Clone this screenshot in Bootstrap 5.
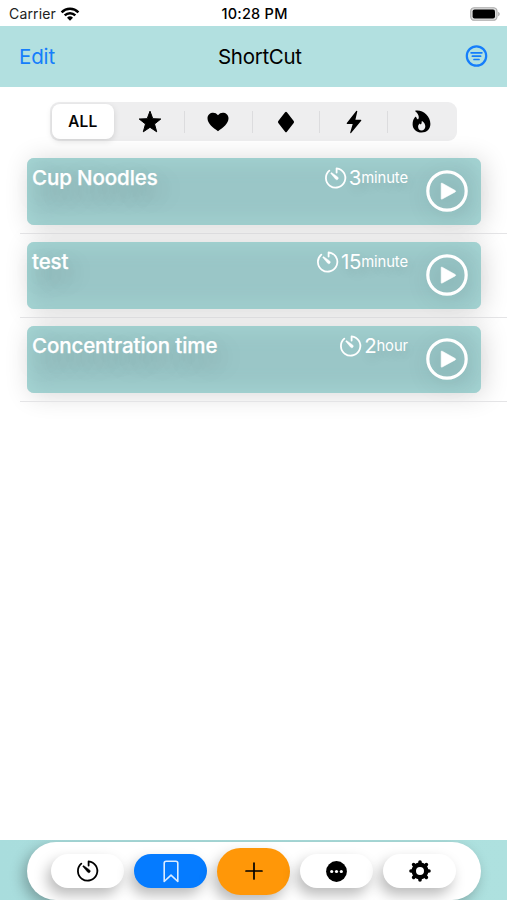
<!DOCTYPE html>
<html lang="en">
<head>
<meta charset="utf-8">
<meta name="viewport" content="width=device-width, initial-scale=1">
<title>ShortCut</title>
<link href="https://cdn.jsdelivr.net/npm/bootstrap@5.3.0/dist/css/bootstrap.min.css" rel="stylesheet">
<style>
body{font-family:Inter,"Liberation Sans",sans-serif;color:#000;background:#fff}
svg{display:block;flex:none}
.screen{height:900px}
.status{height:26px;font-size:14px;padding:1px 7px 0 9px}
.status>div{flex:1 1 0}
.carrier{letter-spacing:.15px;color:#222}
.clock{font-weight:500;font-size:14.5px;letter-spacing:.25px}
.titlebar{height:61px;background:#b2e0e0;padding:0 19px;font-size:20.5px}
.titlebar>div{flex:1 1 0}
.titlebar>.lead-side{flex:0 0 199px}
.edit{color:#157efb;letter-spacing:-.15px}
.title{letter-spacing:-.3px}
.edit,.title{position:relative;top:.5px}
.segments{width:407px;height:39px;margin:15px 0 9px 50px;background:#eeeeef;border-radius:9px;padding:2px 2px 2px 2px}
.segment{flex:1 1 0;position:relative}
.segment.on{flex:0 0 62px;height:35px;margin-right:3px;background:#fff;border-radius:8px;box-shadow:0 2px 6px rgba(0,0,0,.13);font-size:15.5px;font-weight:500;letter-spacing:.25px;-webkit-text-stroke:.2px #000}
.segment.bar{border-right:1px solid #dcdcde;height:22px}
.entry{height:84px;padding:8px 26px 8px 27px;position:relative}
.entry::after{content:"";position:absolute;left:20px;right:0;bottom:0;height:1px;background:#e4e4e6}
.tile{height:67px;border-radius:7px;background:#9ac6c7;color:#fff;padding:0 13px 0 5px;box-shadow:inset 0 0 22px #a7d8d6,3px 2px 26px rgba(0,0,0,.16)}
.tile-name{font-size:20.5px;font-weight:500;line-height:26px;padding-top:7px;letter-spacing:-.1px;-webkit-text-stroke:.25px #fff;text-shadow:4px 10px 26px rgba(0,40,40,.28)}
.time{height:26px;margin:7px 18px 0 0;line-height:26px;text-shadow:2px 5px 12px rgba(0,40,40,.12)}
.num{font-size:20.5px;margin-left:1px;letter-spacing:-.3px}
.unit{font-size:14.8px;letter-spacing:-.1px}
.play{margin-top:-1px;filter:drop-shadow(2px 5px 10px rgba(0,40,40,.2))}
.footer-bar{height:60px;background:linear-gradient(90deg,#a9dddd,#aee1df);padding:2px 26px 0 27px;overflow:hidden}
.dock{height:58px;border-radius:29px;background:#fff;padding:0 25px 0 24px;box-shadow:-4px 5px 14px rgba(0,0,0,.28)}
.pill{width:73px;height:34px;border-radius:17px;background:#fff;box-shadow:-4px 7px 14px rgba(0,0,0,.27)}
.pill.blue{background:#057bff}
.pill.orange{height:47px;border-radius:24px;background:#ff9708}
</style>
<script src="https://cdn.jsdelivr.net/npm/bootstrap@5.3.0/dist/js/bootstrap.bundle.min.js"></script>
</head>
<body>
<svg width="0" height="0" class="position-absolute" aria-hidden="true">
<symbol id="timer" viewBox="0 0 24 24"><path d="M5.3 4.6A9.7 9.7 0 1 0 12.6 2.3v4.2" fill="none" stroke="currentColor" stroke-width="1.8" stroke-linecap="round" stroke-linejoin="round"/><path d="M6.9 7.6c-.3-.6.3-1.1.9-.8l5.8 4.1c1.7 1.5-.2 3.8-1.9 2.3z" fill="currentColor" stroke="currentColor" stroke-width=".5"/></symbol>
<symbol id="play" viewBox="0 0 42 42"><circle cx="21" cy="21" r="19.2" fill="none" stroke="currentColor" stroke-width="3.2"/><path d="M15.2 13.7v14.8q0 1 1 .5l13-7.1q1-.7 0-1.4l-13-7.3q-1-.5-1 .5z" fill="currentColor" stroke="currentColor" stroke-width=".6"/></symbol>
</svg>
<div class="screen d-flex flex-column overflow-hidden">
<div class="status d-flex align-items-center">
<div class="d-flex align-items-center"><span class="carrier">Carrier</span>
<svg class="ms-1" width="20" height="14" viewBox="0 0 20 14" fill="none" stroke="#000" stroke-width="2.5"><path d="M1.6 5.3a12 12 0 0 1 16.8 0M4.7 8.4a7.6 7.6 0 0 1 10.6 0"/><path d="M7 10.8a4.3 4.3 0 0 1 6 0l-3 3z" fill="#000" stroke="none"/></svg></div>
<span class="clock">10:28 PM</span>
<div class="d-flex justify-content-end"><svg width="30" height="14" viewBox="0 0 30 14"><rect x=".7" y=".7" width="26.3" height="12.6" rx="3.6" fill="#ddd" stroke="#aaa" stroke-width="1.1"/><rect x="2.6" y="2.5" width="22.4" height="9" rx="2" fill="#000"/><path d="M28.2 4.7c2 .8 2 3.8 0 4.6z" fill="#aaa"/></svg></div>
</div>
<nav class="titlebar d-flex align-items-center">
<div class="lead-side"><span class="edit">Edit</span></div><span class="title">ShortCut</span>
<div class="d-flex justify-content-end"><svg width="23" height="23" viewBox="0 0 23 23" fill="none" stroke="#157efb"><circle cx="11.5" cy="11" r="9.7" stroke-width="2.2"/><path d="M6.1 7.8h10.8M7.4 11.2h8.2M9 14.5h5" stroke-width="1.7" stroke-linecap="round"/></svg></div>
</nav>
<div class="segments d-flex align-items-center">
<div class="segment on d-flex align-items-center justify-content-center">ALL</div>
<div class="segment bar d-flex align-items-center justify-content-center"><svg width="24" height="24" viewBox="0 0 24 24"><path d="M12 1.2l2.8 7.5 8 .3-6.3 5 2.2 7.8-6.7-4.5-6.7 4.5L7.5 14 1.2 9l8-.3z" stroke="#000" stroke-linejoin="round"/></svg></div>
<div class="segment bar d-flex align-items-center justify-content-center"><svg width="22" height="20" viewBox="0 0 22 20"><path d="M11 19.2C6 15.8.5 11.5.5 6.3.5.7 7.8-1.2 11 3.3 14.2-1.2 21.5.7 21.5 6.3c0 5.2-5.5 9.5-10.5 12.9z"/></svg></div>
<div class="segment bar d-flex align-items-center justify-content-center"><svg width="18" height="22" viewBox="0 0 18 22"><path d="M8.1 1.2q.9-1 1.8 0l6.8 8.9q.7.9 0 1.8l-6.8 8.9q-.9 1-1.8 0L1.3 11.9q-.7-.9 0-1.8z"/></svg></div>
<div class="segment bar d-flex align-items-center justify-content-center"><svg width="16" height="24" viewBox="0 0 16 24"><path d="M10.2.9L.8 13q-.5.9.5.9h5.4L4.2 22.6q0 1.1.9.5L15.2 10.8q.5-1-.5-1H9.4l1.9-8.3q0-1.2-1.1-.6z"/></svg></div>
<div class="segment d-flex align-items-center justify-content-center"><svg width="19" height="23" viewBox="0 0 19 23"><path fill-rule="evenodd" d="M3.8.5C11-.4 18.4 6 18.4 14c0 5.2-3.8 8.5-8.8 8.5S.6 19.2.6 14.2c0-3 1-5.5 2.5-7.2.5-.5 1.1-.2 1.3.4.3 1.1.9 1.8 1.8 1.9C7.6 7 6.4 4 3.5 1.6 3 1.1 3.2.6 3.8.5zM9.5 20.4c2.3 0 3.8-1.5 3.8-3.9 0-2.2-1.1-4.1-3-5.3-.4-.2-.6 0-.6.4.1 1.3-.2 2.2-.9 2.9-.5-.2-.8-.5-1.1-.9-1 .8-1.6 1.9-1.6 3.1 0 2.3 1.3 3.7 3.4 3.7z"/></svg></div>
</div>
<main class="flex-grow-1">
<div class="entry"><div class="tile d-flex align-items-start"><div class="tile-name flex-grow-1">Cup Noodles</div><div class="time d-flex align-items-center"><svg width="24" height="24"><use href="#timer"/></svg><span class="num">3</span><span class="unit">minute</span></div><svg class="play align-self-center" width="42" height="42"><use href="#play"/></svg></div></div>
<div class="entry"><div class="tile d-flex align-items-start"><div class="tile-name flex-grow-1">test</div><div class="time d-flex align-items-center"><svg width="24" height="24"><use href="#timer"/></svg><span class="num">15</span><span class="unit">minute</span></div><svg class="play align-self-center" width="42" height="42"><use href="#play"/></svg></div></div>
<div class="entry"><div class="tile d-flex align-items-start"><div class="tile-name flex-grow-1">Concentration time</div><div class="time d-flex align-items-center"><svg width="24" height="24"><use href="#timer"/></svg><span class="num">2</span><span class="unit">hour</span></div><svg class="play align-self-center" width="42" height="42"><use href="#play"/></svg></div></div>
</main>
<footer class="footer-bar"><div class="dock d-flex align-items-center justify-content-between">
<div class="pill d-flex align-items-center justify-content-center"><svg width="24" height="24"><use href="#timer"/></svg></div>
<div class="pill blue d-flex align-items-center justify-content-center"><svg width="16" height="23" viewBox="0 0 16 23"><path d="M1.2 3.2q0-2 2-2h9.6q2 0 2 2v18.3L8 15.2l-6.8 6.3z" fill="none" stroke="#dcecff" stroke-width="1.6" stroke-linejoin="round"/></svg></div>
<div class="pill orange d-flex align-items-center justify-content-center"><svg width="18" height="18" viewBox="0 0 18 18"><path d="M9 1v16M1 9h16" stroke="#000" stroke-width="1.7" stroke-linecap="round"/></svg></div>
<div class="pill d-flex align-items-center justify-content-center"><svg width="21" height="21" viewBox="0 0 21 21"><circle cx="10.5" cy="10.5" r="10.4"/><g fill="#fff"><circle cx="5.7" cy="10.5" r="1.6"/><circle cx="10.5" cy="10.5" r="1.6"/><circle cx="15.3" cy="10.5" r="1.6"/></g></svg></div>
<div class="pill d-flex align-items-center justify-content-center"><svg width="22" height="22" viewBox="-11 -11 22 22"><circle r="6.2" fill="none" stroke="#000" stroke-width="4.4"/><g stroke="#000" stroke-width="3.6" stroke-linecap="round"><path d="M0-7.5v-1.5M0 7.5v1.5M-7.5 0h-1.5M7.5 0h1.5"/><path d="M0-7.5v-1.5M0 7.5v1.5M-7.5 0h-1.5M7.5 0h1.5" transform="rotate(45)"/></g></svg></div>
</div></footer>
</div>
</body>
</html>
